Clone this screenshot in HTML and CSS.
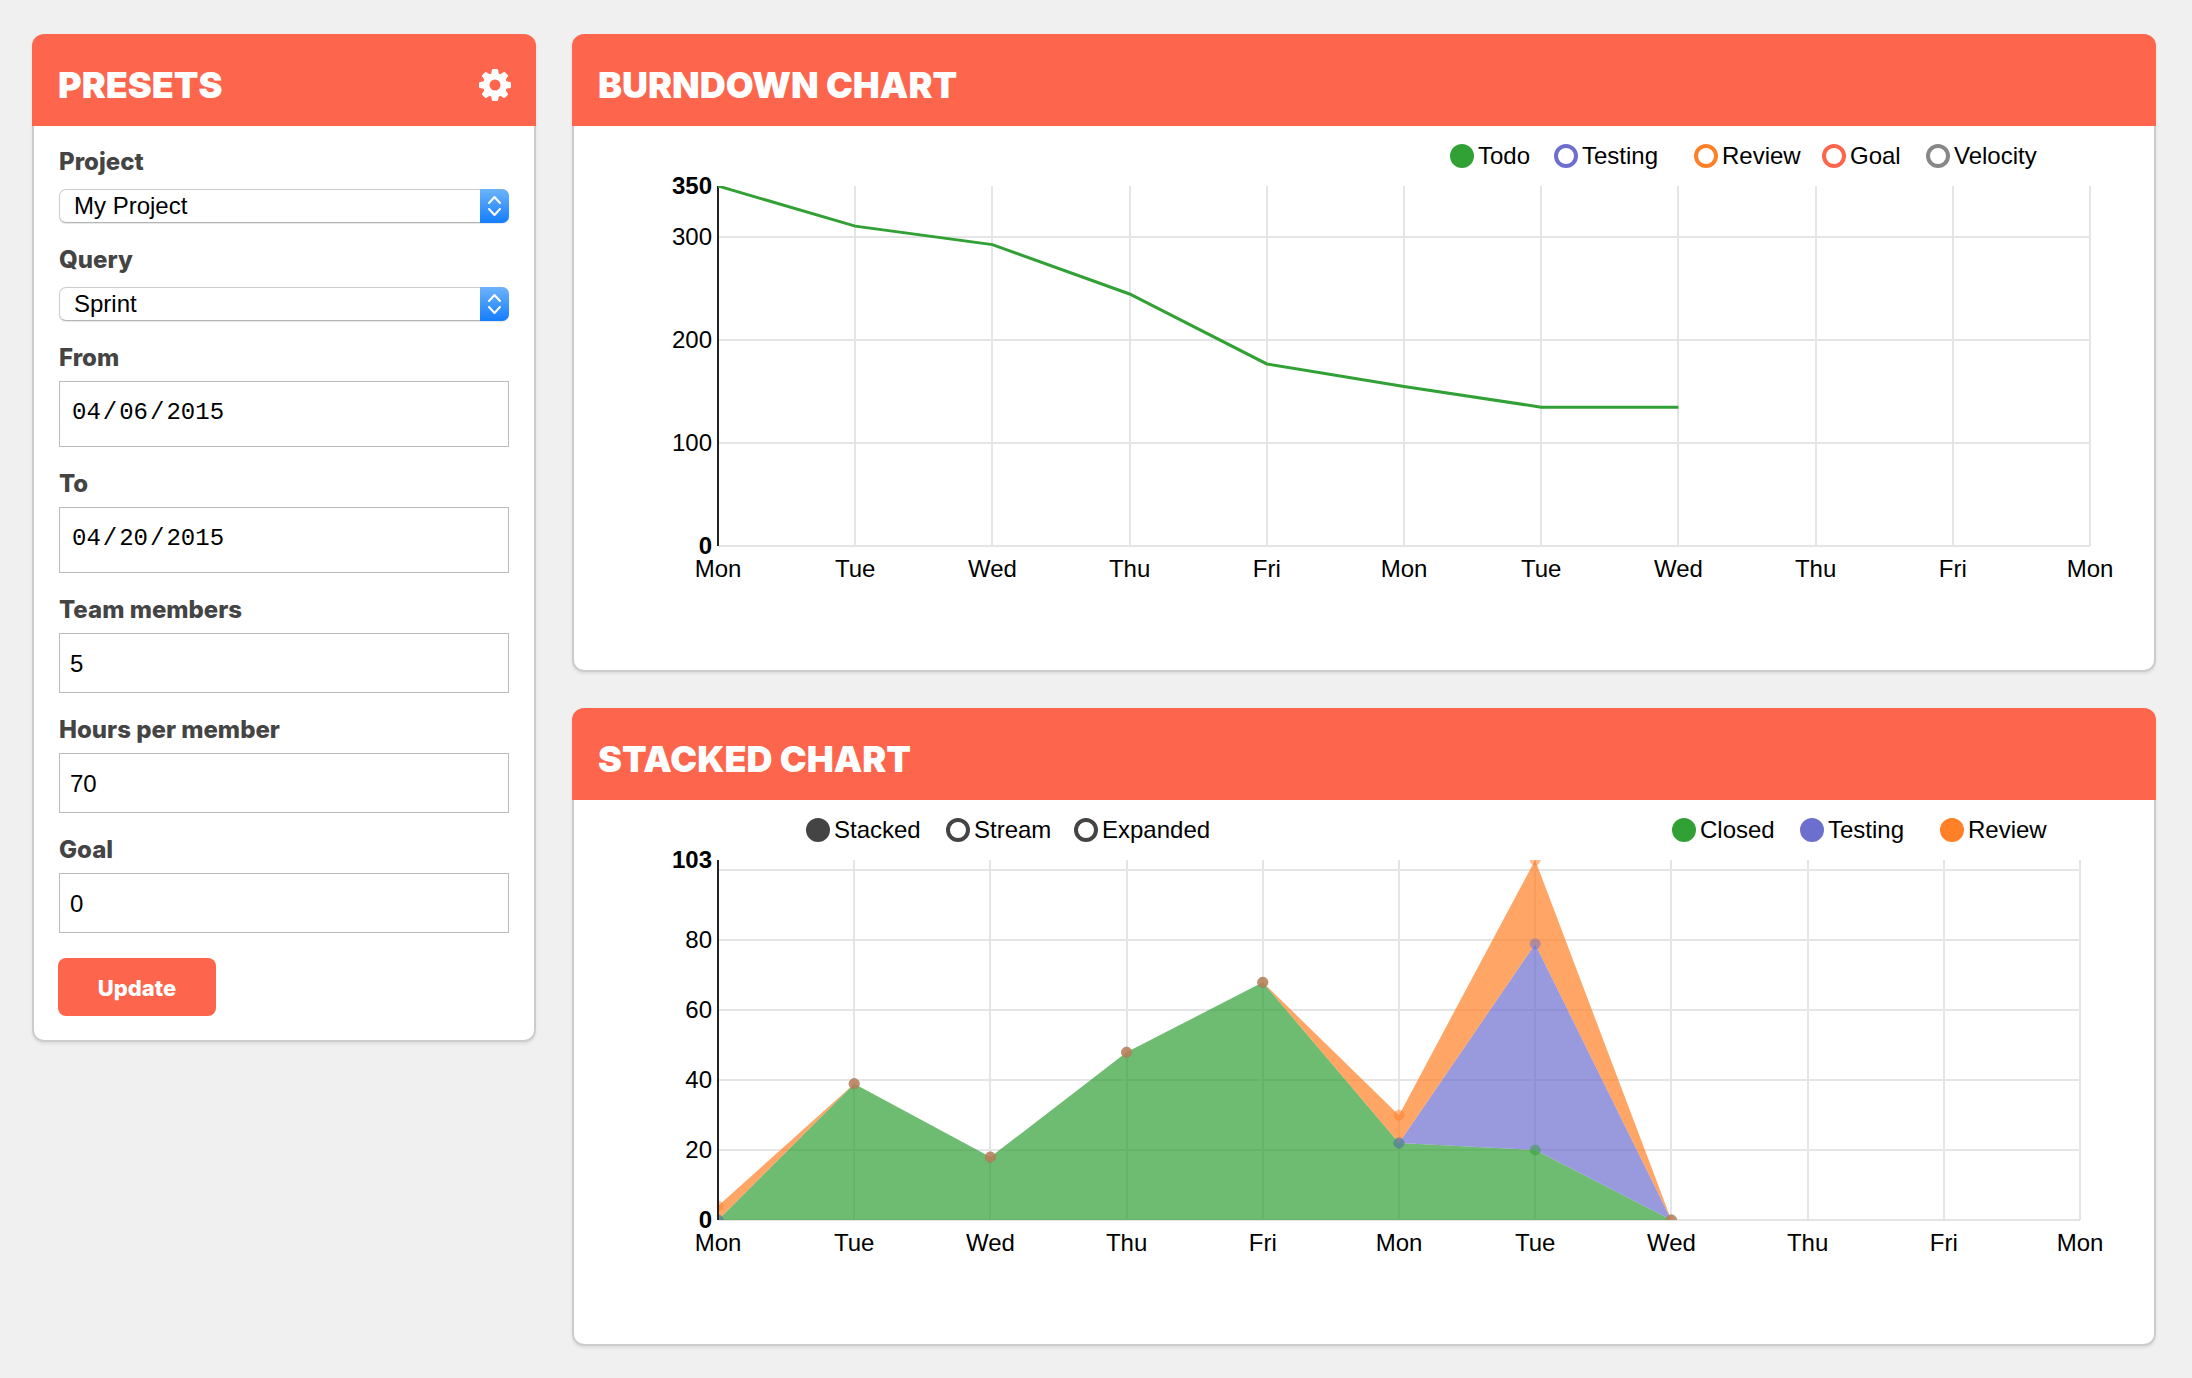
FILE: index.html
```html
<!DOCTYPE html>
<html lang="en-US">
<head>
<meta charset="utf-8">
<title>Burndown</title>
<link rel="stylesheet" href="styles.css">
</head>
<body>
<main class="dashboard">
  <section class="panel">
    <header class="panel-header">
      <h2 class="panel-title">Presets</h2>
      <button class="settings" type="button" aria-label="Settings">
        <svg class="settings-icon" viewBox="0 0 32 32" aria-hidden="true">
          <g fill="#fff">
            <path id="tooth" d="M12 6 L12.900 1 Q13.100 0 14 0 H18 Q18.900 0 19.100 1 L20 6 V26 L19.100 31 Q18.900 32 18 32 H14 Q13.100 32 12.900 31 L12 26 Z"/>
            <use href="#tooth" transform="rotate(45 16 16)"/>
            <use href="#tooth" transform="rotate(90 16 16)"/>
            <use href="#tooth" transform="rotate(135 16 16)"/>
            <circle cx="16" cy="16" r="12"/>
          </g>
          <circle cx="16" cy="16" r="5.500" fill="#fe654d"/>
        </svg>
      </button>
    </header>
    <form class="panel-body presets">
      <div class="field">
        <label class="field-label" for="project">Project</label>
        <div class="select">
          <select class="select-input" id="project"><option>My Project</option></select>
          <span class="select-arrows"><svg viewBox="0 0 29 34" aria-hidden="true"><path d="M9 14l5.500-6 5.500 6M9 20l5.500 6 5.500-6"/></svg></span>
        </div>
      </div>
      <div class="field">
        <label class="field-label" for="query">Query</label>
        <div class="select">
          <select class="select-input" id="query"><option>Sprint</option></select>
          <span class="select-arrows"><svg viewBox="0 0 29 34" aria-hidden="true"><path d="M9 14l5.500-6 5.500 6M9 20l5.500 6 5.500-6"/></svg></span>
        </div>
      </div>
      <div class="field">
        <label class="field-label" for="from">From</label>
        <input class="text-input date-input" id="from" type="date" value="2015-04-06">
      </div>
      <div class="field">
        <label class="field-label" for="to">To</label>
        <input class="text-input date-input" id="to" type="date" value="2015-04-20">
      </div>
      <div class="field">
        <label class="field-label" for="members">Team members</label>
        <input class="text-input" id="members" type="number" value="5">
      </div>
      <div class="field">
        <label class="field-label" for="hours">Hours per member</label>
        <input class="text-input" id="hours" type="number" value="70">
      </div>
      <div class="field">
        <label class="field-label" for="goal">Goal</label>
        <input class="text-input" id="goal" type="number" value="0">
      </div>
      <button class="update" type="submit">Update</button>
    </form>
  </section>

  <div class="charts">
    <section class="panel">
      <header class="panel-header"><h2 class="panel-title">Burndown chart</h2></header>
      <div class="panel-body">
        <div class="legends">
          <div class="legend legend-burndown">
            <label class="key green"><input type="checkbox" checked>Todo</label>
            <label class="key purple"><input type="checkbox">Testing</label>
            <label class="key orange"><input type="checkbox">Review</label>
            <label class="key red"><input type="checkbox">Goal</label>
            <label class="key gray"><input type="checkbox">Velocity</label>
          </div>
        </div>
        <svg class="chart" id="burndown" viewBox="0 0 1580 484" role="img" aria-label="Burndown chart"></svg>
      </div>
    </section>
    <section class="panel">
      <header class="panel-header"><h2 class="panel-title">Stacked chart</h2></header>
      <div class="panel-body">
        <div class="legends legends-stacked">
          <div class="legend legend-mode">
            <label class="key dark"><input type="radio" name="mode" checked>Stacked</label>
            <label class="key dark"><input type="radio" name="mode">Stream</label>
            <label class="key dark"><input type="radio" name="mode">Expanded</label>
          </div>
          <div class="legend legend-series">
            <label class="key green"><input type="checkbox" checked>Closed</label>
            <label class="key purple"><input type="checkbox" checked>Testing</label>
            <label class="key orange"><input type="checkbox" checked>Review</label>
          </div>
        </div>
        <svg class="chart" id="stacked" viewBox="0 0 1580 484" role="img" aria-label="Stacked chart"></svg>
      </div>
    </section>
  </div>
</main>
<script src="charts.js"></script>
</body>
</html>
```
FILE: styles.css
```css
* { box-sizing: border-box; }

body {
  margin: 0;
  min-height: 100vh;
  background: #f0f0f0;
  color: #000;
  font: 24px/30px "Liberation Sans", Arial, sans-serif;
}

.dashboard {
  display: grid;
  grid-template-columns: 504px minmax(0, 1fr);
  align-items: start;
  gap: 36px;
  padding: 34px 36px 30px 32px;
}
.charts { display: grid; gap: 36px; }

.panel {
  border-radius: 12px;
  box-shadow: 0 2px 3px rgba(0, 0, 0, .08);
}
.panel-header {
  display: flex;
  align-items: center;
  justify-content: space-between;
  height: 92px;
  padding: 10px 25px 0 26px;
  border-radius: 12px 12px 0 0;
  background: #fe654d;
}
.panel-title {
  margin: 0;
  color: #fff;
  font: 900 36px/44px Inter, sans-serif;
  text-transform: uppercase;
}
.panel-body {
  border: 2px solid #ccc;
  border-top: 0;
  border-radius: 0 0 12px 12px;
  background: #fff;
}

.settings {
  display: flex;
  padding: 0;
  border: 0;
  background: none;
}
.settings-icon { width: 32px; height: 32px; }

.presets {
  display: flex;
  flex-direction: column;
  gap: 22px;
  padding: 21px 25px 24px;
}
.field { display: flex; flex-direction: column; gap: 8px; }
.field-label {
  color: #444;
  font: 800 24px/30px Inter, sans-serif;
}
.text-input {
  width: 100%;
  height: 60px;
  padding: 2px 10px 0;
  border: 1px solid #bbb;
  border-radius: 0;
  background: #fff;
  color: #000;
  font: 24px/30px "Liberation Sans", Arial, sans-serif;
  appearance: none;
}
.text-input::-webkit-inner-spin-button { display: none; }
.date-input {
  height: 66px;
  padding: 0 10px 2px;
  font-family: "Liberation Mono", "Courier New", monospace;
}
.date-input::-webkit-calendar-picker-indicator { display: none; }
.date-input::-webkit-datetime-edit-month-field,
.date-input::-webkit-datetime-edit-day-field,
.date-input::-webkit-datetime-edit-year-field { padding: 0 2px; }

.select { position: relative; margin-top: 4px; }
.select-input {
  display: block;
  width: 100%;
  height: 34px;
  padding: 0 40px 0 14px;
  border: 1px solid #ccc;
  border-bottom-color: #b5b5b5;
  border-radius: 7px;
  background: #fff;
  box-shadow: 0 1px 1px rgba(0, 0, 0, .1);
  color: #000;
  font: inherit;
  appearance: none;
}
.select-arrows {
  position: absolute;
  inset: 0 0 0 auto;
  width: 29px;
  border-radius: 0 7px 7px 0;
  background: linear-gradient(#6db3f9, #147dff);
  pointer-events: none;
}
.select-arrows svg {
  display: block;
  fill: none;
  stroke: #fff;
  stroke-width: 2;
  stroke-linecap: round;
  stroke-linejoin: round;
}

.update {
  align-self: flex-start;
  width: 158px;
  height: 58px;
  margin: 3px 0 0 -1px;
  padding: 2px 0 0;
  border: 0;
  border-radius: 8px;
  background: #fe654d;
  color: #fff;
  font: 800 22px/30px Inter, sans-serif;
}

.legends {
  display: flex;
  justify-content: flex-end;
  height: 60px;
  padding-right: 108px;
}
.legends-stacked {
  justify-content: space-between;
  padding: 0 102px 0 232px;
}
.legend { display: grid; align-items: center; }
.legend-burndown { grid-template-columns: 104px 140px 128px 104px 120px; }
.legend-mode { grid-template-columns: 140px 128px auto; }
.legend-series { grid-template-columns: 128px 140px 112px; }
.key { display: flex; align-items: center; gap: 4px; }
.key input {
  width: 24px;
  height: 24px;
  margin: 0;
  border: 4px solid var(--color);
  border-radius: 50%;
  appearance: none;
}
.key input:checked { background: var(--color); }
.green { --color: #31a035; }
.purple { --color: #6d6fcf; }
.orange { --color: #ff8027; }
.red { --color: #fe654d; }
.gray { --color: #888; }
.dark { --color: #444; }

.chart {
  display: block;
  width: 100%;
  height: auto;
  overflow: visible;
}
.chart text { text-anchor: middle; }
.chart .tick-y { text-anchor: end; }
.chart .limit { font-weight: 700; }
.chart .grid { fill: none; stroke: #e5e5e5; stroke-width: 2; }
.chart .axis { stroke: #222; stroke-width: 2; }
.chart .line { fill: none; stroke: var(--color); stroke-width: 3; }
.chart .area { fill: var(--color); opacity: .7; }
.chart .point { fill: var(--color); stroke: var(--color); opacity: .5; }
```
FILE: charts.js
```js
const DAYS = ["Mon", "Tue", "Wed", "Thu", "Fri", "Mon", "Tue", "Wed", "Thu", "Fri", "Mon"];
const LEFT = 144;
const HEIGHT = 360;

// Builds the scales, grid, axis and tick labels shared by both charts.
function frame(max, ticks, right) {
  const x = i => LEFT + (right - LEFT) * i / (DAYS.length - 1);
  const y = v => HEIGHT - HEIGHT * v / max;
  let grid = "";
  let labels = "";
  DAYS.forEach((day, i) => {
    grid += `M${Math.round(x(i))} 0V${HEIGHT}`;
    labels += `<text x="${x(i)}" y="391">${day}</text>`;
  });
  ticks.forEach(v => {
    grid += `M${LEFT} ${Math.round(y(v))}H${right}`;
    if (v && max - v > 5) labels += `<text class="tick-y" x="138" y="${y(v) + 8}">${v}</text>`;
  });
  [0, max].forEach(v => {
    labels += `<text class="tick-y limit" x="138" y="${y(v) + 8}">${v}</text>`;
  });
  return {
    x, y,
    back: `<clipPath id="clip${max}"><rect x="${LEFT}" y="0" width="${right - LEFT}" height="${HEIGHT}"/></clipPath><path class="grid" d="${grid}"/>`,
    front: `<path class="axis" d="M${LEFT} 0V${HEIGHT}"/>${labels}`,
    clip: `clip-path="url(#clip${max})"`
  };
}

function drawBurndown(svg, values) {
  const f = frame(350, [0, 100, 200, 300], 1516);
  const points = values.map((v, i) => `${f.x(i)},${f.y(v)}`).join(" ");
  svg.innerHTML = `${f.back}${f.front}<g ${f.clip}><polyline class="line green" points="${points}"/></g>`;
}

function drawStacked(svg, series) {
  const f = frame(103, [0, 20, 40, 60, 80, 100], 1506);
  let base = series[0].values.map(() => 0);
  let areas = "";
  let dots = "";
  series.forEach(({ color, values }) => {
    const top = values.map((v, i) => base[i] + v);
    const upper = top.map((v, i) => `${f.x(i)},${f.y(v)}`);
    const lower = base.map((v, i) => `${f.x(i)},${f.y(v)}`).reverse();
    areas += `<polygon class="area ${color}" points="${upper.concat(lower).join(" ")}"/>`;
    top.forEach((v, i) => {
      dots += `<circle class="point ${color}" cx="${f.x(i)}" cy="${f.y(v)}" r="5"/>`;
    });
    base = top;
  });
  svg.innerHTML = `${f.back}<g ${f.clip}>${areas}${dots}</g>${f.front}`;
}

drawBurndown(document.getElementById("burndown"), [350, 311, 293, 245, 177, 155, 135, 135]);
drawStacked(document.getElementById("stacked"), [
  { color: "green", values: [0, 39, 18, 48, 68, 22, 20, 0] },
  { color: "purple", values: [0, 0, 0, 0, 0, 0, 59, 0] },
  { color: "orange", values: [4, 0, 0, 0, 0, 8, 24, 0] }
]);
```
